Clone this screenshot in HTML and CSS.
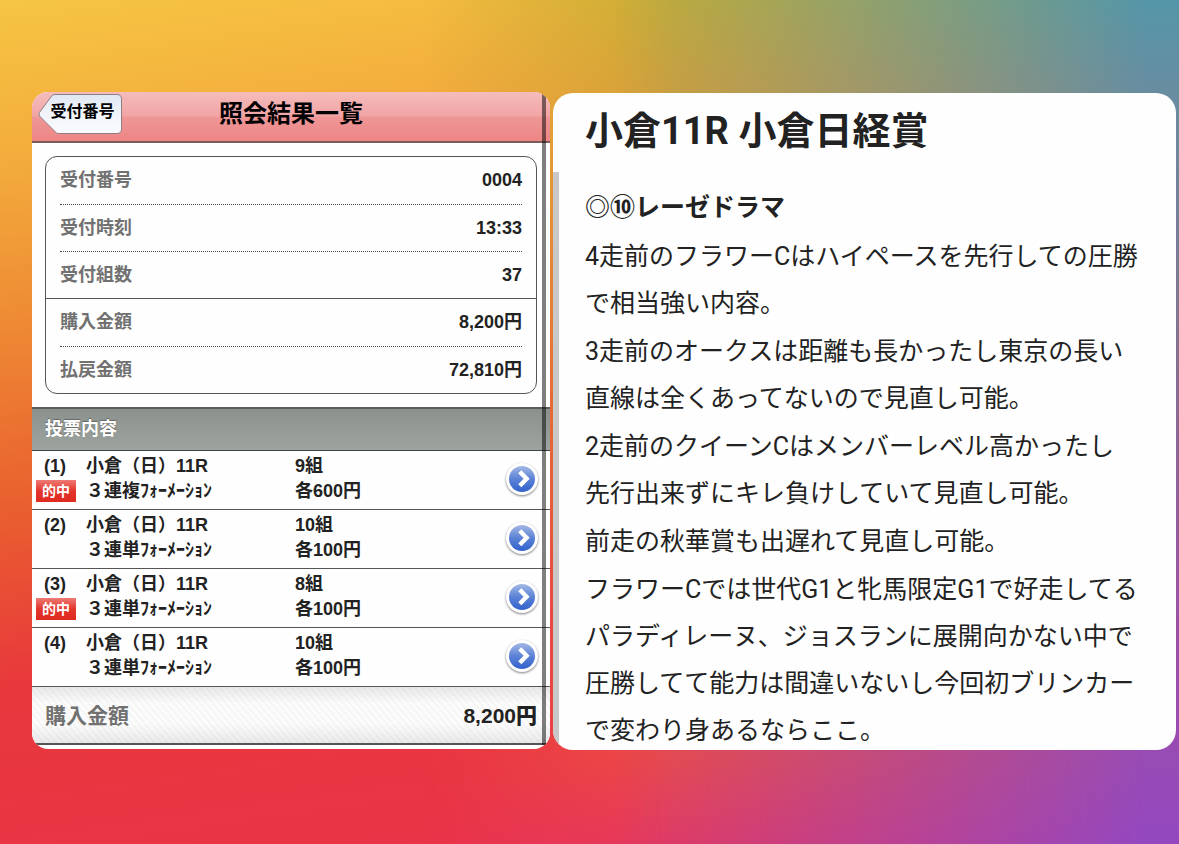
FILE: index.html
```html
<!DOCTYPE html>
<html lang="ja">
<head>
  <meta charset="UTF-8">
  <meta name="viewport" content="width=device-width, initial-scale=1">
  <title>照会結果一覧</title>
  <link rel="stylesheet" href="styles.css">
</head>
<body>

  <svg class="defs" aria-hidden="true">
    <defs>
      <linearGradient id="blue" x1="0" y1="0" x2="0" y2="1">
        <stop offset="0" stop-color="#a3b8e4"/>
        <stop offset="0.5" stop-color="#5c82d6"/>
        <stop offset="1" stop-color="#3262cc"/>
      </linearGradient>
      <linearGradient id="plate" x1="0" y1="0" x2="0" y2="1">
        <stop offset="0" stop-color="#e0e7f2"/>
        <stop offset="0.5" stop-color="#f1f4fa"/>
        <stop offset="1" stop-color="#fafbfe"/>
      </linearGradient>
      <symbol id="arrow" viewBox="0 0 36 36">
        <circle cx="18" cy="18" r="16" fill="#fff"/>
        <circle cx="18" cy="18" r="13" fill="url(#blue)"/>
        <path d="M15.800 10.800l6.800 7-6.800 7" fill="none" stroke="#fff" stroke-width="4.400"/>
      </symbol>
    </defs>
  </svg>

  <main class="board">

    <!-- 照会結果 -->
    <section class="panel result">
      <header class="bar">
        <button class="back" type="button">
          <svg class="back-shape" viewBox="0 0 84 40" preserveAspectRatio="none" aria-hidden="true">
            <path d="M14 1.5Q15.500 0.500 17 0.500H79Q83.500 0.500 83.500 5V35Q83.500 39.500 79 39.500H20Q18.500 39.500 17.500 38L1.500 22Q0.500 20 1.500 18.500Z" fill="url(#plate)" stroke="#8d7f86"/>
          </svg>
          <span>受付番号</span>
        </button>
        <h1>照会結果一覧</h1>
      </header>

      <div class="summary">
        <dl>
          <div><dt>受付番号</dt><dd>0004</dd></div>
          <div><dt>受付時刻</dt><dd>13:33</dd></div>
          <div><dt>受付組数</dt><dd>37</dd></div>
        </dl>
        <dl>
          <div><dt>購入金額</dt><dd>8,200円</dd></div>
          <div><dt>払戻金額</dt><dd>72,810円</dd></div>
        </dl>
      </div>

      <h2 class="section">投票内容</h2>

      <ul class="bets">
        <li>
          <div class="no">(1)<span class="hit">的中</span></div>
          <div class="race">小倉（日）11R<span>３連複ﾌｫｰﾒｰｼｮﾝ</span></div>
          <div class="amount">9組<span>各600円</span></div>
          <button class="detail" type="button" aria-label="詳細"><svg><use href="#arrow"/></svg></button>
        </li>
        <li>
          <div class="no">(2)</div>
          <div class="race">小倉（日）11R<span>３連単ﾌｫｰﾒｰｼｮﾝ</span></div>
          <div class="amount">10組<span>各100円</span></div>
          <button class="detail" type="button" aria-label="詳細"><svg><use href="#arrow"/></svg></button>
        </li>
        <li>
          <div class="no">(3)<span class="hit">的中</span></div>
          <div class="race">小倉（日）11R<span>３連単ﾌｫｰﾒｰｼｮﾝ</span></div>
          <div class="amount">8組<span>各100円</span></div>
          <button class="detail" type="button" aria-label="詳細"><svg><use href="#arrow"/></svg></button>
        </li>
        <li>
          <div class="no">(4)</div>
          <div class="race">小倉（日）11R<span>３連単ﾌｫｰﾒｰｼｮﾝ</span></div>
          <div class="amount">10組<span>各100円</span></div>
          <button class="detail" type="button" aria-label="詳細"><svg><use href="#arrow"/></svg></button>
        </li>
      </ul>

      <div class="total"><span>購入金額</span><strong>8,200円</strong></div>
    </section>

    <!-- 予想 -->
    <article class="panel note">
      <h2>小倉11R 小倉日経賞</h2>
      <h3>◎⑩レーゼドラマ</h3>
      <div class="text">
        <p>4走前のフラワーCはハイペースを先行しての圧勝で相当強い内容。</p>
        <p>3走前のオークスは距離も長かったし東京の長い直線は全くあってないので見直し可能。</p>
        <p>2走前のクイーンCはメンバーレベル高かったし<br>先行出来ずにキレ負けしていて見直し可能。</p>
        <p>前走の秋華賞も出遅れて見直し可能。</p>
        <p>フラワーCでは世代G1と牝馬限定G1で好走してるパラディレーヌ、ジョスランに展開向かない中で圧勝してて能力は間違いないし今回初ブリンカーで変わり身あるならここ。</p>
      </div>
    </article>

  </main>

</body>
</html>
```

FILE: styles.css
```css
:root {
  --ink: #222;
  --label: #717171;
  --line: #555;
}

* {
  box-sizing: border-box;
  margin: 0;
  padding: 0;
}

body {
  position: relative;
  min-height: 100vh;
  font-family: "Liberation Sans", "Noto Sans CJK JP", sans-serif;
  color: var(--ink);
  background: linear-gradient(172deg, #f6c543, #f3ac3c 16%, #ee8a34 32%, #e9602f 50%, #e8383c 68%, #e93446 88%, #e8325c);
}

/* 中央と右側の色 */
body::before,
body::after {
  content: "";
  position: absolute;
  inset: 0;
}

body::before {
  background: linear-gradient(to bottom, #c8ac34, #d4a038 12%, #e2703c 50%, #ec4a48 90%, #e63a5e);
  -webkit-mask-image: linear-gradient(to right, transparent 36%, #000 57%);
  mask-image: linear-gradient(to right, transparent 36%, #000 57%);
}

body::after {
  background: linear-gradient(to bottom, #5596a8, #6a8ca0 12%, #85708f 42%, #9c50a4 75%, #9448c0);
  -webkit-mask-image: linear-gradient(to right, transparent 52%, #000 97%);
  mask-image: linear-gradient(to right, transparent 52%, #000 97%);
}

.defs {
  position: absolute;
  width: 0;
  height: 0;
}

.board {
  position: relative;
  z-index: 1;
  display: grid;
  grid-template-columns: 518fr 623fr;
  gap: 3px;
  align-items: start;
  padding: 92px 3px 94px 32px;
}

.panel {
  position: relative;
  overflow: hidden;
  background: #fefefe;
}

/* 照会結果 */
.result {
  padding-bottom: 4px;
  border-radius: 16px;
  font-weight: bold;
}

.result::after {
  content: "";
  position: absolute;
  top: 2px;
  right: 4px;
  bottom: 4px;
  width: 4px;
  background: rgba(0, 0, 0, 0.5);
}

.bar {
  display: grid;
  grid-template-columns: 90px 1fr 90px;
  align-items: start;
  height: 51px;
  padding-top: 2px;
  background: linear-gradient(to bottom, #f5bcbc, #f2a5a5 48%, #ef9696 52%, #ee8585);
  border-bottom: 2px solid #7d5a5a;
}

.bar h1 {
  text-align: center;
  font-size: 24px;
  line-height: 40px;
  color: #000;
}

.back {
  position: relative;
  width: 84px;
  height: 40px;
  margin-left: 6px;
  padding-left: 5px;
  border: 0;
  background: none;
  font: bold 16px/36px "Liberation Sans", "Noto Sans CJK JP", sans-serif;
  color: #000;
}

.back span {
  position: relative;
  display: block;
  height: 40px;
}

.back-shape {
  position: absolute;
  inset: 0;
  width: 100%;
  height: 100%;
}

.summary {
  margin: 13px;
  border: 1px solid var(--line);
  border-radius: 12px;
}

.summary dl + dl {
  border-top: 1px solid var(--line);
}

.summary dl div {
  display: flex;
  justify-content: space-between;
  height: 47px;
  margin: 0 14px;
  font-size: 18px;
  line-height: 46px;
}

.summary dl div + div {
  border-top: 1px dotted #444;
}

.summary dt {
  color: var(--label);
}

.section {
  height: 44px;
  padding: 0 13px;
  border-top: 2px solid #59605c;
  border-bottom: 1px solid #444;
  background: linear-gradient(to bottom, #8b928d, #9da39f);
  font-size: 18px;
  line-height: 41px;
  color: #fff;
  text-shadow: 0 -1px 1px #666;
}

.bets {
  list-style: none;
}

.bets li {
  display: grid;
  grid-template-columns: 50px 209px 1fr auto;
  height: 59px;
  padding: 3px 10px 0 4px;
  border-bottom: 1px solid var(--line);
  font-size: 18px;
  line-height: 25px;
}

.no {
  padding-left: 8px;
}

.hit {
  display: block;
  width: 40px;
  height: 22px;
  margin: 1px 0 0 -8px;
  background: linear-gradient(to bottom, #ee7b74, #e3352c 50%, #e02a20);
  font-size: 14px;
  line-height: 22px;
  text-align: center;
  color: #fff;
}

.race span,
.amount span {
  display: block;
}

.detail {
  width: 36px;
  height: 36px;
  margin-top: 7px;
  border: 0;
  background: none;
}

.detail svg {
  display: block;
  width: 36px;
  height: 36px;
  filter: drop-shadow(0 1px 1px rgba(0, 0, 0, 0.5));
}

.total {
  display: flex;
  justify-content: space-between;
  height: 58px;
  padding: 0 13px;
  border-bottom: 2px solid var(--line);
  background:
    linear-gradient(to bottom, rgba(0, 0, 0, 0.08), transparent 30%, transparent 65%, rgba(0, 0, 0, 0.08)),
    repeating-linear-gradient(50deg, #fcfcfc 0 3px, #f6f6f6 3px 5px);
  font-size: 21px;
  line-height: 57px;
}

.total span {
  color: var(--label);
}

/* 予想 */
.note {
  margin-top: 1px;
  padding: 14px 30px 0 32px;
  border-radius: 20px;
  font-family: Roboto, "Noto Sans CJK JP", sans-serif;
}

.note::before {
  content: "";
  position: absolute;
  top: 79px;
  bottom: 0;
  left: 0;
  width: 6px;
  background: #c8c8c8;
}

.note h2 {
  margin-bottom: 29px;
  font-size: 38px;
  line-height: 48px;
}

.note h3,
.note p {
  font-size: 25px;
  line-height: 47px;
}

.text {
  display: grid;
  gap: 1px;
  margin-bottom: -4px;
  padding-top: 2px;
}
```
